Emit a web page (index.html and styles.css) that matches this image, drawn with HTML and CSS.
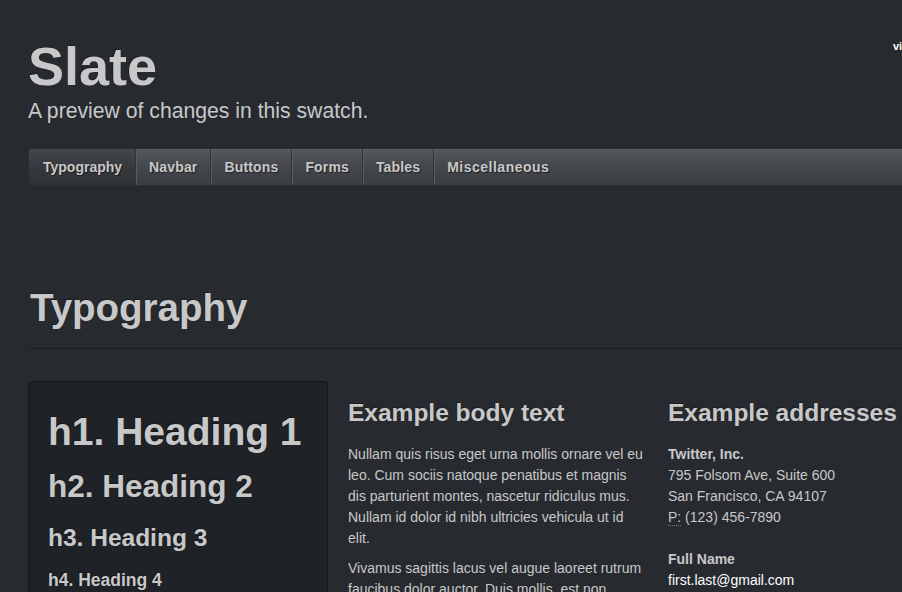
FILE: index.html
```html
<!DOCTYPE html>
<html>
<head>
<meta charset="utf-8">
<title>Slate</title>
<link rel="stylesheet" href="styles.css">
</head>
<body>
<a class="corner-link" href="#">view</a>
<div class="container">
  <header class="masthead">
    <h1 class="title">Slate</h1>
    <p class="lead">A preview of changes in this swatch.</p>
    <nav class="subnav">
      <a class="tab active" href="#">Typography</a>
      <a class="tab" href="#">Navbar</a>
      <a class="tab" href="#">Buttons</a>
      <a class="tab" href="#">Forms</a>
      <a class="tab" href="#">Tables</a>
      <a class="tab last" href="#">Miscellaneous</a>
    </nav>
  </header>

  <section class="section">
    <div class="page-header">
      <h1 class="section-title">Typography</h1>
    </div>
    <div class="row">
      <div class="col">
        <div class="well">
          <h1 class="wh1">h1. Heading 1</h1>
          <h2 class="wh2">h2. Heading 2</h2>
          <h3 class="wh3">h3. Heading 3</h3>
          <h4 class="wh4">h4. Heading 4</h4>
        </div>
      </div>
      <div class="col">
        <h3 class="col-title">Example body text</h3>
        <p class="para">Nullam quis risus eget urna mollis ornare vel eu leo. Cum sociis natoque penatibus et magnis dis parturient montes, nascetur ridiculus mus. Nullam id dolor id nibh ultricies vehicula ut id elit.</p>
        <p class="para">Vivamus sagittis lacus vel augue laoreet rutrum faucibus dolor auctor. Duis mollis, est non commodo luctus, nisi erat porttitor ligula.</p>
      </div>
      <div class="col">
        <h3 class="col-title">Example addresses</h3>
        <address class="addr">
          <strong>Twitter, Inc.</strong><br>
          795 Folsom Ave, Suite 600<br>
          San Francisco, CA 94107<br>
          <abbr class="abbr" title="Phone">P:</abbr> (123) 456-7890
        </address>
        <address class="addr">
          <strong>Full Name</strong><br>
          <a class="link" href="#">first.last@gmail.com</a>
        </address>
      </div>
    </div>
  </section>
</div>
</body>
</html>
```
FILE: styles.css
```css
html, body {
  overflow: hidden;
}
body {
  margin: 0;
  background: #272b30;
  color: #c8c8c8;
  font-family: "Liberation Sans", Arial, sans-serif;
  font-size: 14px;
  line-height: 21px;
  position: relative;
  min-height: 592px;
}
.corner-link {
  position: absolute;
  left: 893px;
  top: 36px;
  font-size: 11px;
  font-weight: bold;
  color: #ffffff;
  text-decoration: none;
  white-space: nowrap;
}
.container {
  margin-left: 28px;
  width: 940px;
}
.masthead {
  padding-top: 39px;
}
.title {
  margin: 0;
  font-size: 54px;
  line-height: 54px;
  font-weight: bold;
  color: #c8c8c8;
  text-shadow: -1px -1px 0 rgba(0,0,0,0.3);
}
.lead {
  margin: 6px 0 0;
  font-size: 21.2px;
  line-height: 24px;
  color: #c8c8c8;
}
.subnav {
  margin-top: 25px;
  height: 36px;
  display: flex;
  border: 1px solid #2a2e33;
  border-radius: 4px;
  background: linear-gradient(#53585d, #45494e 45%, #3a3e43);
  box-shadow: inset 0 1px 0 rgba(255,255,255,0.06);
}
.tab {
  display: flex;
  align-items: center;
  padding: 0 13px;
  font-size: 14px;
  font-weight: bold;
  letter-spacing: 0.15px;
  color: #c8c8c8;
  text-decoration: none;
  text-shadow: 1px 1px 1px rgba(0,0,0,0.55);
  border-right: 1px solid #30343a;
  box-shadow: 1px 0 0 #585d62;
}
.tab.active {
  padding: 0 13px 0 14px;
  letter-spacing: 0;
  border-radius: 4px 0 0 4px;
  background: linear-gradient(#42474c, #363a3f 50%, #2e3237);
}
.tab.last {
  border-right: none;
  box-shadow: none;
  letter-spacing: 0.5px;
}
.section {
  margin-top: 102px;
}
.page-header {
  padding-bottom: 20px;
  border-bottom: 1px solid #1c1e22;
  margin-bottom: 32px;
}
.section-title {
  margin: 0 0 0 2px;
  font-size: 38.5px;
  line-height: 40px;
  font-weight: bold;
  color: #c8c8c8;
  text-shadow: -1px -1px 0 rgba(0,0,0,0.3);
}
.row {
  display: grid;
  grid-template-columns: 300px 300px 300px;
  column-gap: 20px;
}
.well {
  background: #1f2226;
  border: 1px solid #15171a;
  border-radius: 4px;
  padding: 0 19px 19px;
  box-shadow: inset 0 1px 1px rgba(0,0,0,0.1);
  height: 260px;
}
.wh1, .wh2, .wh3, .wh4, .col-title {
  font-weight: bold;
  color: #c8c8c8;
  margin: 0;
  text-shadow: -1px -1px 0 rgba(0,0,0,0.3);
}
.wh1 {
  font-size: 39px;
  line-height: 42px;
  margin-top: 29px;
}
.wh2 {
  font-size: 31.5px;
  line-height: 36px;
  margin-top: 15px;
}
.wh3 {
  font-size: 24.5px;
  line-height: 27px;
  margin-top: 20px;
}
.wh4 {
  font-size: 17.5px;
  line-height: 20px;
  margin-top: 19px;
}
.col-title {
  font-size: 24.5px;
  line-height: 27px;
  margin: 18px 0 18px;
}
.para {
  margin: 0 0 9px;
}
.addr {
  font-style: normal;
  margin: 0 0 21px;
}
.abbr {
  text-decoration: none;
  border-bottom: 1px dotted #7a7a7a;
  cursor: help;
}
.link {
  color: #ffffff;
  text-decoration: none;
}
```
